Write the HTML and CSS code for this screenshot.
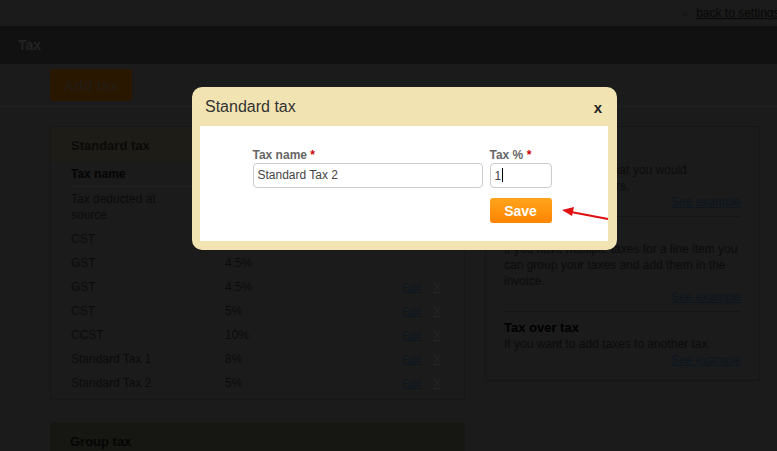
FILE: index.html
```html
<!DOCTYPE html>
<html lang="en">
<head>
  <meta charset="UTF-8">
  <title>Tax</title>
  <link rel="stylesheet" href="styles.css">
</head>
<body>
  <div class="topbar">
    <span class="back-arrow">&laquo;</span>
    <a href="#" class="back-link">back to settings</a>
  </div>
  <div class="page-title">Tax</div>
  <div class="toolbar">
    <button class="add-btn">Add tax</button>
  </div>

  <div class="content">
    <div class="main-col">
      <div class="tax-box">
        <div class="tax-box-title">Standard tax</div>
        <div class="tax-table">
          <div class="th">Tax name</div><div class="th">Rate</div><div class="th"></div><div class="th"></div>
          <div class="td name">Tax deducted at source</div><div class="td">2%</div><div class="td"></div><div class="td"></div>
          <div class="td name">CST</div><div class="td">4%</div><div class="td"></div><div class="td"></div>
          <div class="td name">GST</div><div class="td">4.5%</div><div class="td"></div><div class="td"></div>
          <div class="td name">GST</div><div class="td">4.5%</div><div class="td"><a href="#" class="edit">Edit</a></div><div class="td"><a href="#" class="del">X</a></div>
          <div class="td name">CST</div><div class="td">5%</div><div class="td"><a href="#" class="edit">Edit</a></div><div class="td"><a href="#" class="del">X</a></div>
          <div class="td name">CCST</div><div class="td">10%</div><div class="td"><a href="#" class="edit">Edit</a></div><div class="td"><a href="#" class="del">X</a></div>
          <div class="td name">Standard Tax 1</div><div class="td">8%</div><div class="td"><a href="#" class="edit">Edit</a></div><div class="td"><a href="#" class="del">X</a></div>
          <div class="td name">Standard Tax 2</div><div class="td">5%</div><div class="td"><a href="#" class="edit">Edit</a></div><div class="td"><a href="#" class="del">X</a></div>
        </div>
      </div>
      <div class="tax-box group">
        <div class="tax-box-title">Group tax</div>
      </div>
    </div>

    <div class="help-col">
      <div class="help-item">
        <h4>Standard tax</h4>
        <p>This is a simple tax that you would<br>charge your customers.</p>
        <a href="#" class="example">See example</a>
      </div>
      <div class="help-item">
        <h4>Group tax</h4>
        <p>If you have multiple taxes for a line item you can group your taxes and add them in the invoice.</p>
        <a href="#" class="example">See example</a>
      </div>
      <div class="help-item">
        <h4>Tax over tax</h4>
        <p>If you want to add taxes to another tax.</p>
        <a href="#" class="example">See example</a>
      </div>
    </div>
  </div>

  <!-- page behind is shown dimmed; the dialog sits over it -->
  <div class="modal">
    <div class="modal-head">
      <span class="modal-title">Standard tax</span>
      <span class="modal-close">x</span>
    </div>
    <div class="modal-body">
      <div class="form-row">
        <div class="field">
          <label>Tax name <span class="req">*</span></label>
          <div class="input wide">Standard Tax 2</div>
        </div>
        <div class="field">
          <label>Tax % <span class="req">*</span></label>
          <div class="input narrow">1<span class="caret"></span></div>
          <button class="save-btn">Save</button>
        </div>
      </div>
    </div>
    <svg class="arrow" width="50" height="14" viewBox="0 0 50 14">
      <line x1="47" y1="12" x2="10" y2="5" stroke="#e01010" stroke-width="2.2"/>
      <polygon points="1,3 13,0 11,9" fill="#e01010"/>
    </svg>
  </div>
</body>
</html>
```

FILE: styles.css
```css
* { box-sizing: border-box; }
body {
  margin: 0;
  width: 777px;
  height: 451px;
  overflow: hidden;
  font-family: "Liberation Sans", Arial, sans-serif;
  font-size: 12px;
  color: #0b0b0b;
  background: #1b1b1b;
}
a { color: #0b1620; }

/* dimmed page */
.topbar {
  height: 26px;
  display: flex;
  align-items: center;
  padding-left: 682px;
  white-space: nowrap;
}
.back-arrow { color: #101010; margin-right: 8px; font-size: 11px; }
.back-link { color: #070707; }

.page-title {
  height: 38px;
  background: #111;
  color: #232323;
  font-weight: bold;
  font-size: 14px;
  padding: 11px 18px;
}
.toolbar {
  height: 43px;
  padding: 5px 50px 0;
  border-bottom: 1px solid #202020;
}
.add-btn {
  width: 82px;
  height: 32px;
  background: #2a1700;
  border: none;
  border-radius: 4px;
  color: #231c12;
  font-family: inherit;
  font-weight: bold;
  font-size: 15px;
}

.content {
  display: flex;
  gap: 20px;
  padding: 19px 17px 0 50px;
}
.main-col { width: 415px; }
.tax-box { border: 1px solid #171717; padding-bottom: 4px; }
.tax-box-title {
  height: 35px;
  background: #1e1c17;
  color: #0a0a0a;
  font-weight: bold;
  font-size: 13px;
  padding: 11px 20px;
}
.tax-box.group { margin-top: 22px; border: none; }
.tax-box.group .tax-box-title { background: #161712; color: #050505; padding-top: 12px; }
.tax-table {
  display: grid;
  grid-template-columns: 154px 177px 31px 31px;
  padding-left: 20px;
}
.th {
  font-weight: bold;
  color: #050505;
  padding: 4px 0;
  line-height: 16px;
  border-bottom: 1px solid #202020;
}
.td { padding: 4px 0; line-height: 16px; }
.td.name { padding-right: 40px; }
.edit { font-size: 11px; }
.del { color: #262626; font-size: 11px; }

.help-col {
  width: 275px;
  border: 1px solid #161616;
  padding: 12px 18px 6px;
  align-self: flex-start;
}
.help-item {
  border-bottom: 1px solid #151515;
  padding: 8px 0 6px;
}
.help-item:first-child { padding-top: 7px; }
.help-item:last-child { border-bottom: none; }
.help-item h4 { margin: 0; font-size: 13px; color: #000; line-height: 16px; }
.help-item p { margin: 0; line-height: 16px; }
.example { display: block; text-align: right; line-height: 16px; }

/* dialog */
.modal {
  position: fixed;
  left: 192px;
  top: 87px;
  width: 425px;
  height: 163px;
  background: #f2e4b2;
  border-radius: 10px;
  padding: 0 9px 9px 8px;
}
.modal-head {
  height: 39px;
  display: flex;
  align-items: center;
  justify-content: space-between;
  padding: 1px 6px 0 5px;
}
.modal-title { font-size: 16px; color: #333; }
.modal-close { font-size: 15px; font-weight: bold; color: #222; }
.modal-body {
  background: #fff;
  height: 115px;
  display: flex;
  justify-content: center;
  padding-top: 22px;
}
.form-row { display: flex; gap: 7px; padding-right: 4px; }
.field { display: flex; flex-direction: column; }
.field label {
  font-weight: bold;
  color: #666;
  line-height: 14px;
  margin-bottom: 1px;
}
.req { color: #c00; }
.input {
  height: 25px;
  border: 1px solid #ccc;
  border-radius: 4px;
  padding: 4px;
  color: #444;
  line-height: 15px;
}
.input.wide { width: 230px; }
.input.narrow { width: 62px; }
.caret {
  display: inline-block;
  width: 1px;
  height: 14px;
  background: #000;
  vertical-align: -2px;
  margin-left: 1px;
}
.save-btn {
  margin-top: 10px;
  width: 62px;
  height: 25px;
  border: none;
  border-radius: 3px;
  background: linear-gradient(#ffa51c, #ff8400);
  color: #fff;
  font-family: inherit;
  font-weight: bold;
  font-size: 14px;
}
.arrow {
  position: absolute;
  left: 369px;
  top: 120px;
}
```
